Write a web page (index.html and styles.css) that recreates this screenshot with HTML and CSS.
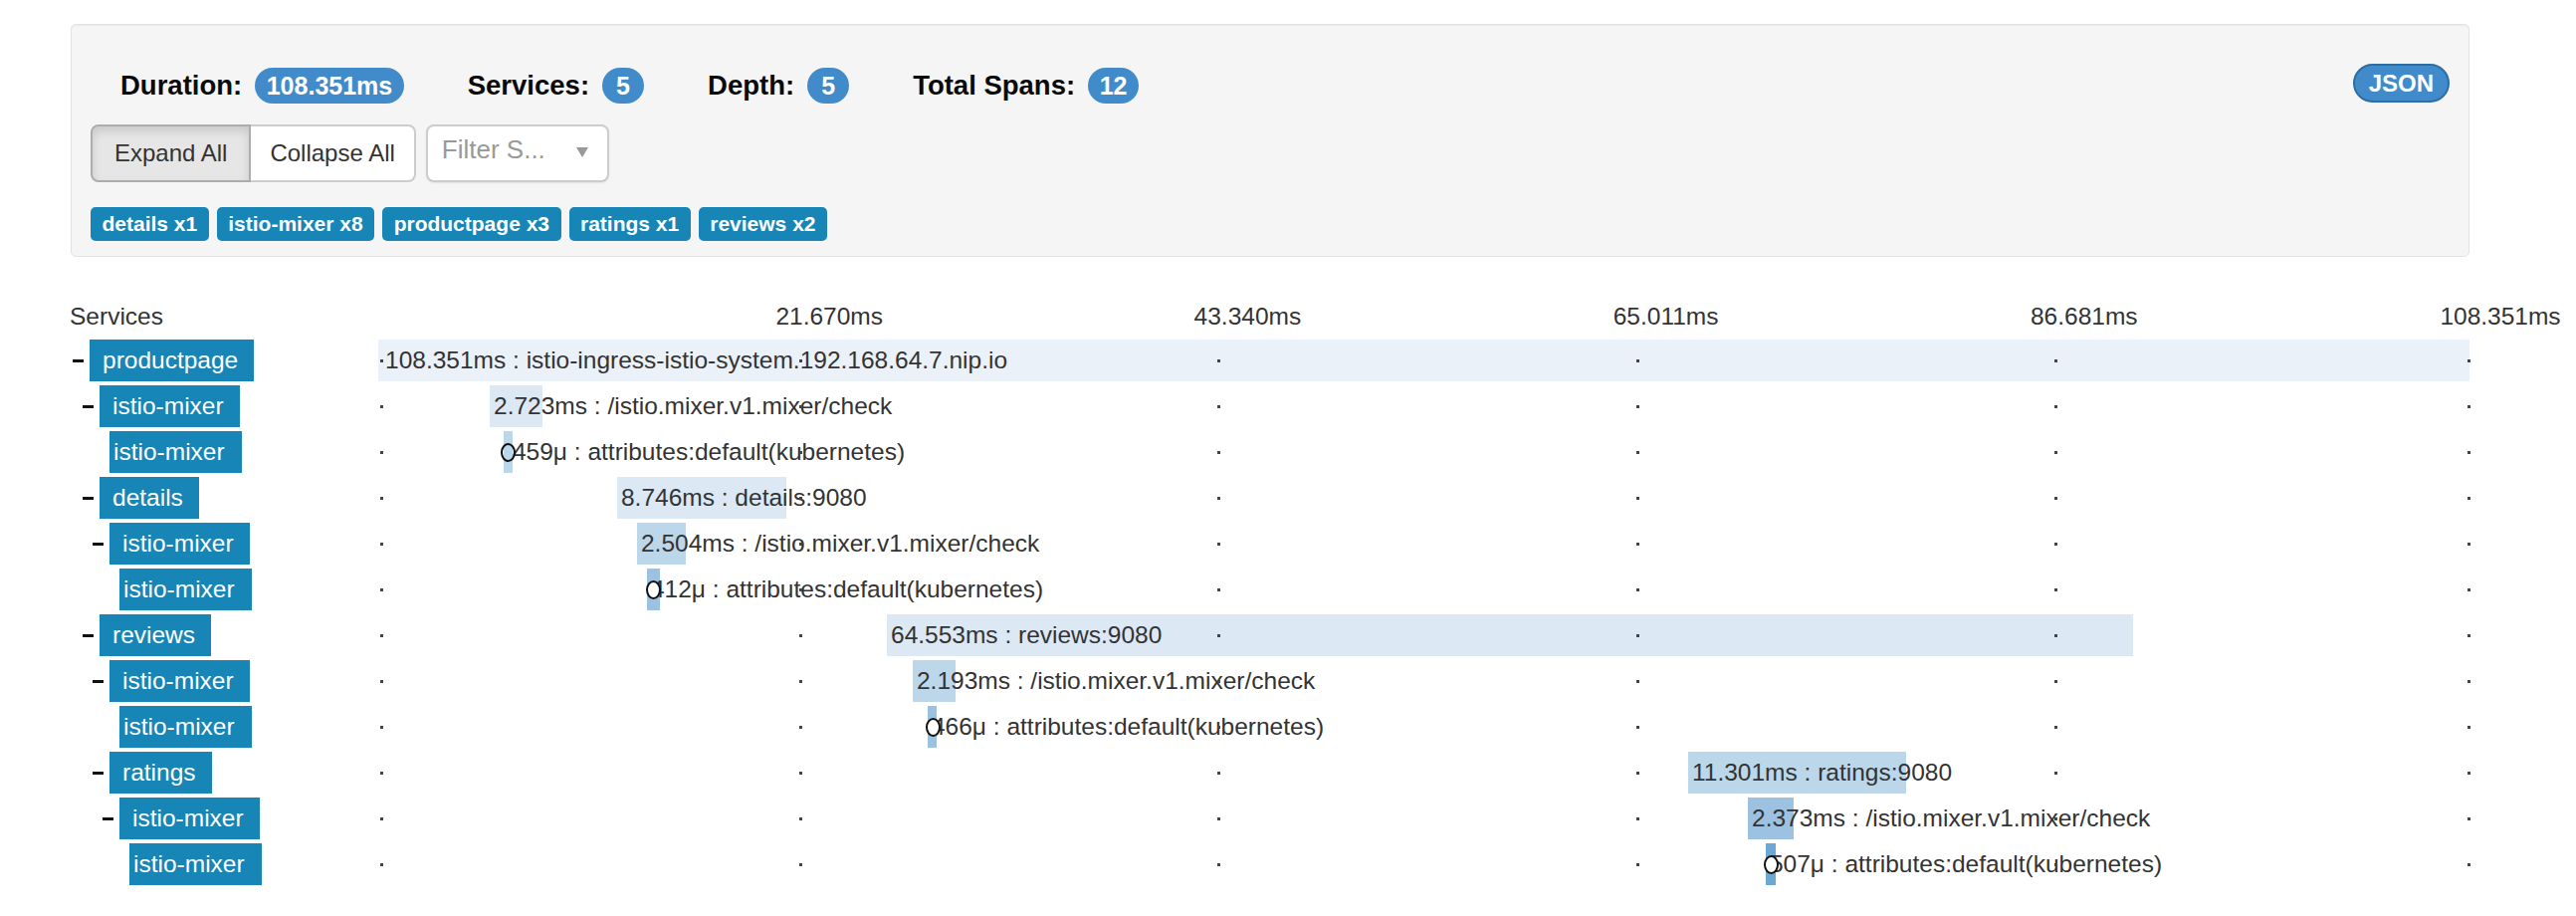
FILE: index.html
```html
<!DOCTYPE html>
<html>
<head>
<meta charset="utf-8">
<link rel="stylesheet" href="styles.css">
</head>
<body>
<div class="page">
  <div class="well">
    <div class="top-row">
      <ul class="summary">
        <li><span class="lbl">Duration:</span><span class="badge">108.351ms</span></li>
        <li><span class="lbl">Services:</span><span class="badge">5</span></li>
        <li><span class="lbl">Depth:</span><span class="badge">5</span></li>
        <li><span class="lbl">Total Spans:</span><span class="badge">12</span></li>
      </ul>
      <span class="json">JSON</span>
    </div>
    <div class="controls">
      <div class="btn-group">
        <span class="btn active">Expand All</span><span class="btn">Collapse All</span>
      </div>
      <div class="select"><span class="ph">Filter S...</span><span class="caret"></span></div>
    </div>
    <div class="tags">
      <span class="tag">details x1</span>
      <span class="tag">istio-mixer x8</span>
      <span class="tag">productpage x3</span>
      <span class="tag">ratings x1</span>
      <span class="tag">reviews x2</span>
    </div>
  </div>

  <div class="trace">
    <div class="head">
      <div class="svc-head">Services</div>
      <div class="ticks">
        <span class="tick l1">21.670ms</span>
        <span class="tick l2">43.340ms</span>
        <span class="tick l3">65.011ms</span>
        <span class="tick l4">86.681ms</span>
        <span class="tick l5">108.351ms</span>
      </div>
    </div>
    <div class="rows">
      <div class="row">
        <div class="svc d1"><span class="toggle"></span><span class="name">productpage</span></div>
        <div class="lane"><div class="bar c1" style="left:0%;width:100%">108.351ms : istio-ingress-istio-system.192.168.64.7.nip.io</div><i class="dot k0"></i><i class="dot k1"></i><i class="dot k2"></i><i class="dot k3"></i><i class="dot k4"></i><i class="dot k5"></i></div>
      </div>
      <div class="row">
        <div class="svc d2"><span class="toggle"></span><span class="name">istio-mixer</span></div>
        <div class="lane"><div class="bar c2" style="left:5.331%;width:2.513%">2.723ms : /istio.mixer.v1.mixer/check</div><i class="dot k0"></i><i class="dot k1"></i><i class="dot k2"></i><i class="dot k3"></i><i class="dot k4"></i><i class="dot k5"></i></div>
      </div>
      <div class="row">
        <div class="svc d3"><span class="toggle none"></span><span class="name leaf">istio-mixer</span></div>
        <div class="lane"><div class="bar c3 micro wide" style="left:5.997%;width:0.424%">459μ : attributes:default(kubernetes)<span class="ring"></span></div><i class="dot k0"></i><i class="dot k1"></i><i class="dot k2"></i><i class="dot k3"></i><i class="dot k4"></i><i class="dot k5"></i></div>
      </div>
      <div class="row">
        <div class="svc d2"><span class="toggle"></span><span class="name">details</span></div>
        <div class="lane"><div class="bar c2" style="left:11.423%;width:8.072%">8.746ms : details:9080</div><i class="dot k0"></i><i class="dot k1"></i><i class="dot k2"></i><i class="dot k3"></i><i class="dot k4"></i><i class="dot k5"></i></div>
      </div>
      <div class="row">
        <div class="svc d3"><span class="toggle"></span><span class="name">istio-mixer</span></div>
        <div class="lane"><div class="bar c3" style="left:12.375%;width:2.311%">2.504ms : /istio.mixer.v1.mixer/check</div><i class="dot k0"></i><i class="dot k1"></i><i class="dot k2"></i><i class="dot k3"></i><i class="dot k4"></i><i class="dot k5"></i></div>
      </div>
      <div class="row">
        <div class="svc d4"><span class="toggle none"></span><span class="name leaf">istio-mixer</span></div>
        <div class="lane"><div class="bar c4 micro" style="left:12.851%;width:0.62%">412μ : attributes:default(kubernetes)<span class="ring"></span></div><i class="dot k0"></i><i class="dot k1"></i><i class="dot k2"></i><i class="dot k3"></i><i class="dot k4"></i><i class="dot k5"></i></div>
      </div>
      <div class="row">
        <div class="svc d2"><span class="toggle"></span><span class="name">reviews</span></div>
        <div class="lane"><div class="bar c2" style="left:24.322%;width:59.578%">64.553ms : reviews:9080</div><i class="dot k0"></i><i class="dot k1"></i><i class="dot k2"></i><i class="dot k3"></i><i class="dot k4"></i><i class="dot k5"></i></div>
      </div>
      <div class="row">
        <div class="svc d3"><span class="toggle"></span><span class="name">istio-mixer</span></div>
        <div class="lane"><div class="bar c3" style="left:25.559%;width:2.024%">2.193ms : /istio.mixer.v1.mixer/check</div><i class="dot k0"></i><i class="dot k1"></i><i class="dot k2"></i><i class="dot k3"></i><i class="dot k4"></i><i class="dot k5"></i></div>
      </div>
      <div class="row">
        <div class="svc d4"><span class="toggle none"></span><span class="name leaf">istio-mixer</span></div>
        <div class="lane"><div class="bar c4 micro" style="left:26.273%;width:0.43%">466μ : attributes:default(kubernetes)<span class="ring"></span></div><i class="dot k0"></i><i class="dot k1"></i><i class="dot k2"></i><i class="dot k3"></i><i class="dot k4"></i><i class="dot k5"></i></div>
      </div>
      <div class="row">
        <div class="svc d3"><span class="toggle"></span><span class="name">ratings</span></div>
        <div class="lane"><div class="bar c3" style="left:62.637%;width:10.43%">11.301ms : ratings:9080</div><i class="dot k0"></i><i class="dot k1"></i><i class="dot k2"></i><i class="dot k3"></i><i class="dot k4"></i><i class="dot k5"></i></div>
      </div>
      <div class="row">
        <div class="svc d4"><span class="toggle"></span><span class="name">istio-mixer</span></div>
        <div class="lane"><div class="bar c4" style="left:65.493%;width:2.19%">2.373ms : /istio.mixer.v1.mixer/check</div><i class="dot k0"></i><i class="dot k1"></i><i class="dot k2"></i><i class="dot k3"></i><i class="dot k4"></i><i class="dot k5"></i></div>
      </div>
      <div class="row">
        <div class="svc d5"><span class="toggle none"></span><span class="name leaf">istio-mixer</span></div>
        <div class="lane"><div class="bar c5 micro" style="left:66.349%;width:0.468%">507μ : attributes:default(kubernetes)<span class="ring"></span></div><i class="dot k0"></i><i class="dot k1"></i><i class="dot k2"></i><i class="dot k3"></i><i class="dot k4"></i><i class="dot k5"></i></div>
      </div>
    </div>
  </div>
</div>
</body>
</html>
```

FILE: styles.css
```css
* { box-sizing: border-box; }
body {
  margin: 0;
  font-family: "Liberation Sans", Arial, sans-serif;
  color: #333;
  background: #fff;
}
.page { padding: 24px 107px 0 71px; }

.well {
  background: #f5f5f5;
  border: 1px solid #e3e3e3;
  border-radius: 5px;
  box-shadow: inset 0 1px 1px rgba(0,0,0,.05);
  padding: 19px 19px 15px;
}
.top-row {
  display: flex;
  justify-content: space-between;
  align-items: flex-start;
  margin-top: 20px;
}
.summary {
  display: flex;
  align-items: center;
  gap: 64px;
  list-style: none;
  margin: 4px 0 0;
  padding: 0 0 0 30px;
  height: 36px;
}
.summary li { display: flex; align-items: center; gap: 13px; }
.lbl { font-weight: bold; font-size: 27.5px; color: #0a0a0a; }
.badge {
  display: inline-flex;
  align-items: center;
  justify-content: center;
  height: 36px;
  min-width: 42px;
  padding: 0 11.5px;
  border-radius: 18px;
  background: #428bca;
  color: #fff;
  font-weight: bold;
  font-size: 25px;
}
.json {
  display: inline-flex;
  align-items: center;
  height: 39px;
  padding: 0 14px;
  border: 2px solid #2e6da4;
  border-radius: 20px;
  background: #428bca;
  color: #fff;
  font-weight: bold;
  font-size: 24px;
}

.controls {
  display: flex;
  align-items: flex-start;
  gap: 10px;
  margin-top: 21px;
}
.btn-group { display: flex; }
.btn {
  display: inline-flex;
  align-items: center;
  height: 58px;
  padding: 0 20px;
  font-size: 24px;
  color: #333;
  background: #fff;
  border: 2px solid #ccc;
}
.btn-group .btn:first-child { border-radius: 8px 0 0 8px; padding: 0 22px; }
.btn-group .btn:last-child { border-radius: 0 8px 8px 0; border-left: 0; padding: 0 19px; }
.btn.active {
  background: #e6e6e6;
  border-color: #adadad;
  box-shadow: inset 0 5px 10px rgba(0,0,0,.125);
}
.select {
  display: flex;
  align-items: center;
  justify-content: space-between;
  width: 184px;
  height: 58px;
  padding: 0 19px 8px 14px;
  background: #fff;
  border: 2px solid #ccc;
  border-radius: 8px;
  box-shadow: 0 1px 2px rgba(0,0,0,.08);
}
.ph { font-size: 26px; color: #999; }
.caret {
  width: 0;
  height: 0;
  margin-top: 6px;
  border-left: 6.5px solid transparent;
  border-right: 6.5px solid transparent;
  border-top: 10px solid #999;
}

.tags {
  display: flex;
  gap: 8px;
  margin-top: 25px;
}
.tag {
  display: inline-flex;
  align-items: center;
  height: 34px;
  padding: 0 11.5px;
  border-radius: 5px;
  background: #1785b6;
  color: #fff;
  font-weight: bold;
  font-size: 21px;
}

.trace { margin: 39px 0 0 -1px; }
.head {
  display: grid;
  grid-template-columns: 310px 1fr;
  height: 42px;
  align-items: center;
}
.svc-head { font-size: 24.5px; color: #333; }
.ticks { position: relative; height: 42px; }
.tick {
  position: absolute;
  top: 0;
  line-height: 42px;
  font-size: 24.5px;
  color: #333;
  white-space: nowrap;
  transform: translateX(-50%);
}
.l1 { left: calc(20% + 33px); }
.l2 { left: calc(40% + 33px); }
.l3 { left: calc(60% + 33px); }
.l4 { left: calc(80% + 33px); }
.l5 { left: calc(100% + 31px); }

.rows {
  display: flex;
  flex-direction: column;
  gap: 4px;
  margin-top: 2px;
}
.row {
  display: grid;
  grid-template-columns: 310px 1fr;
  height: 42px;
}
.svc { display: flex; align-items: center; }
.d1 { padding-left: 3px; }
.d2 { padding-left: 13px; }
.d3 { padding-left: 23px; }
.d4 { padding-left: 33px; }
.d5 { padding-left: 43px; }
.toggle {
  width: 11px;
  height: 3px;
  margin-right: 6px;
  background: #111;
}
.toggle.none { background: transparent; }
.name {
  display: inline-flex;
  align-items: center;
  height: 42px;
  padding: 0 16px 0 13px;
  background: #1785b6;
  color: #fff;
  font-size: 24.5px;
}
.name.leaf { padding: 0 17px 0 4px; }

.lane { position: relative; height: 42px; }
.bar {
  position: absolute;
  top: 0;
  height: 42px;
  line-height: 42px;
  padding-left: 4px;
  white-space: nowrap;
  overflow: visible;
  font-size: 24.5px;
  color: #333;
}
.bar.wide { padding-left: 9px; }
.c1 { background: #eaf1f8; padding-left: 7px; }
.c2 { background: #dce8f3; }
.c3 { background: #bcd6ea; }
.c4 { background: #9dc2e1; }
.c5 { background: #6da8d5; }
.ring {
  position: absolute;
  left: 50%;
  top: 12px;
  width: 15px;
  height: 19px;
  margin-left: -7px;
  border: 2px solid #111;
  border-radius: 50%;
  background: #fff;
}
.wide .ring { background: transparent; }
.dot {
  position: absolute;
  top: 20px;
  width: 3px;
  height: 3px;
  background: #444;
}
.k0 { left: 2px; }
.k1 { left: calc(20% + 3px); }
.k2 { left: calc(40% + 3px); }
.k3 { left: calc(60% + 3px); }
.k4 { left: calc(80% + 3px); }
.k5 { left: calc(100% - 2px); }
```
